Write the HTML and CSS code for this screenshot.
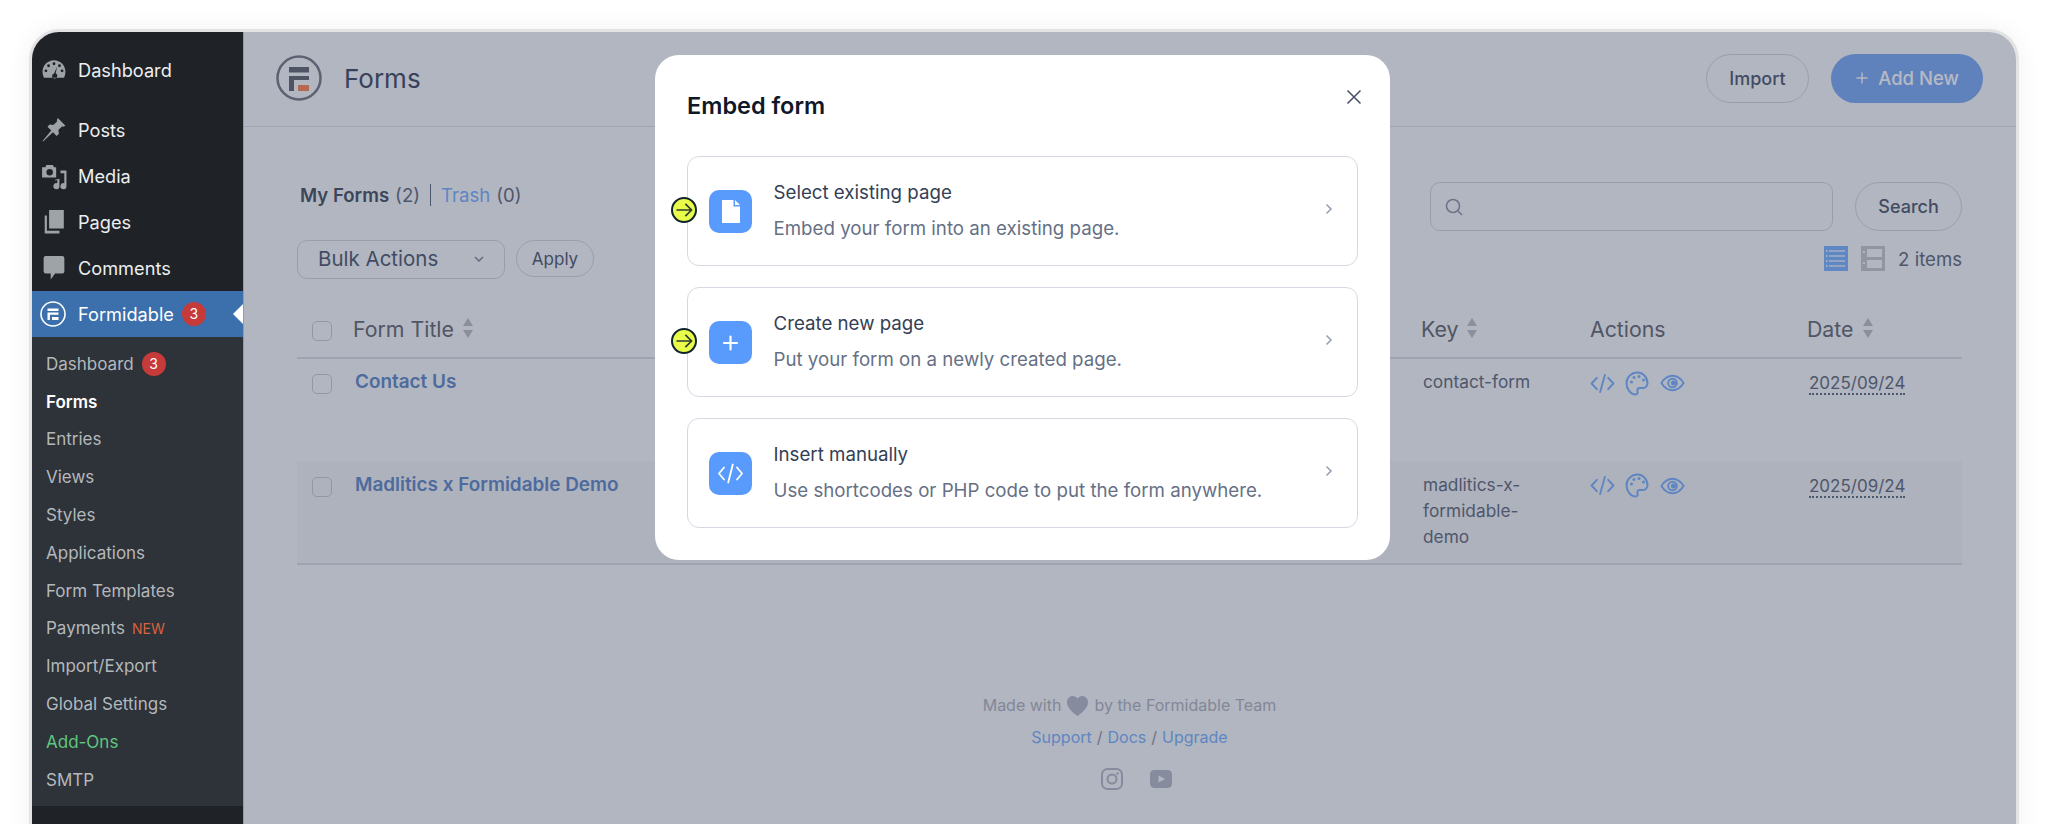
FILE: index.html
```html
<!DOCTYPE html>
<html lang="en">
<head>
    <meta charset="UTF-8" />
    <title>Forms - Formidable</title>
    <link rel="stylesheet" href="styles.css">
</head>
<body>
    <div class="window">
        <!-- Admin menu -->
        <nav class="sidebar">
            <ul class="menu">
                <li class="menu-item first">
                    <svg class="menu-icon" viewBox="0 0 22 22"><path fill-rule="evenodd" d="M11 2C5.200 2 .5 6.700 .5 12.500c0 2 .5 3.800 1.300 5.500h18.400c.8-1.700 1.300-3.500 1.300-5.500C21.500 6.700 16.800 2 11 2zM11 4a1.300 1.300 0 110 2.600A1.300 1.300 0 0111 4zM6 5.800a1.300 1.300 0 110 2.600 1.300 1.300 0 010-2.600zM16 5.800a1.300 1.300 0 110 2.600 1.300 1.300 0 010-2.600zM3.600 10.500a1.300 1.300 0 110 2.600 1.300 1.300 0 010-2.600zM18.400 10.500a1.300 1.300 0 110 2.600 1.300 1.300 0 010-2.600zM13.800 8l-1.300 6.200a2.300 2.300 0 11-3 1.300 2.300 2.300 0 011.600-1.300z"/></svg>
                    Dashboard
                </li>
                <li class="menu-item">
                    <svg class="menu-icon" viewBox="0 0 22 22"><path d="M14.500 0l7 7-2 1-1-.5-3.500 3.500.5 3.500-2 2-3.500-3.500L1 21.500l-.5-.5 8-9.500L5 8l2-2 3.500.5L14 3l-.5-1z"/></svg>
                    Posts
                </li>
                <li class="menu-item">
                    <svg class="menu-icon media" viewBox="0 0 24 24"><path fill-rule="evenodd" d="M1 3h3l1-2h6l1 2h2v9.500H1zM8 4.500a3 3 0 100 6 3 3 0 000-6z"/><path d="M18 6h5.500v14.500a2.800 2.800 0 11-2-2.700V8.500H18zM13 14.500l4-1v7a2.800 2.800 0 11-2-2.700v-3l-2 .5z"/></svg>
                    Media
                </li>
                <li class="menu-item">
                    <svg class="menu-icon" viewBox="0 0 22 22"><path d="M6.500 0H20v17H6.500zM2.500 5h2v14h11.500v2.500H2.500z"/></svg>
                    Pages
                </li>
                <li class="menu-item">
                    <svg class="menu-icon" viewBox="0 0 22 22"><path d="M3.500 0h15a2 2 0 012 2v12a2 2 0 01-2 2H12l-4 5.500V16H3.500a2 2 0 01-2-2V2a2 2 0 012-2z"/></svg>
                    Comments
                </li>
                <li class="menu-item active">
                    <svg class="menu-icon logo-white" viewBox="0 0 26 26"><circle cx="13" cy="13" r="12" fill="none" stroke="#fff" stroke-width="1.600"/><path fill="#fff" d="M7.500 7.500h11v2.400h-11zM7.500 11.500h11v2.300h-8.600v5.200H7.500zM12 16h6.500v3H12z"/></svg>
                    Formidable
                    <span class="count">3</span>
                    <span class="active-arrow"></span>
                </li>
            </ul>
            <ul class="submenu">
                <li>Dashboard <span class="count">3</span></li>
                <li class="current">Forms</li>
                <li>Entries</li>
                <li>Views</li>
                <li>Styles</li>
                <li>Applications</li>
                <li>Form Templates</li>
                <li>Payments <span class="new-tag">NEW</span></li>
                <li>Import/Export</li>
                <li>Global Settings</li>
                <li class="addons">Add-Ons</li>
                <li>SMTP</li>
            </ul>
        </nav>

        <main class="main">
            <header class="topbar">
                <svg class="brand" viewBox="0 0 46 46"><circle cx="23" cy="23" r="21.500" fill="none" stroke="#727780" stroke-width="2.500"/><path fill="#5e626c" d="M13 12h20v5.500H13zM13 21h20v4H18v11h-5z"/><path fill="#ff834b" d="M22 30h11v6H22z"/></svg>
                <h1>Forms</h1>
                <button class="btn btn-ghost import-btn">Import</button>
                <button class="btn btn-primary">
                    <svg class="plus" viewBox="0 0 14 14"><path d="M7 1.500v11M1.500 7h11"/></svg>
                    Add New
                </button>
            </header>

            <section class="content">
                <div class="toolbar">
                    <div class="toolbar-left">
                        <div class="views">
                            <strong>My Forms</strong> <span class="num">(2)</span>
                            <span class="sep"></span>
                            <a class="link">Trash</a> <span class="num">(0)</span>
                        </div>
                        <div class="bulk">
                            <div class="select">
                                Bulk Actions
                                <svg class="select-chev" viewBox="0 0 10 6"><path d="M1 1l4 4 4-4"/></svg>
                            </div>
                            <button class="btn btn-ghost apply-btn">Apply</button>
                        </div>
                    </div>
                    <div class="toolbar-right">
                        <div class="search">
                            <div class="search-input">
                                <svg viewBox="0 0 20 20"><circle cx="9" cy="9" r="6.500"/><path d="M14 14l4 4"/></svg>
                            </div>
                            <button class="btn btn-ghost search-btn">Search</button>
                        </div>
                        <div class="count-row">
                            <svg class="view-icon" viewBox="0 0 24 25"><path fill="#77b1ff" d="M0 0h24v25H0z"/><path stroke="#e4edf9" stroke-width="1.500" d="M5 5h16M5 10h16M5 15h16M5 20h16"/><path fill="#e4edf9" d="M2 4h1.500v2H2zM2 9h1.500v2H2zM2 14h1.500v2H2zM2 19h1.500v2H2z"/></svg>
                            <svg class="view-icon" viewBox="0 0 24 25"><path fill="#c7c6c6" d="M0 0h24v25H0z"/><path fill="#f9fafb" d="M6 3h15v8H6zM6 14h15v8H6z"/><path fill="#f9fafb" d="M2 5h2v2H2zM2 16h2v2H2z"/></svg>
                            <span>2 items</span>
                        </div>
                    </div>
                </div>

                <table class="forms-table">
                    <thead>
                        <tr>
                            <th class="col-check"><span class="check"></span></th>
                            <th class="col-title">Form Title <span class="sort"></span></th>
                            <th class="col-entries"></th>
                            <th class="col-key">Key <span class="sort"></span></th>
                            <th class="col-actions">Actions</th>
                            <th class="col-date">Date <span class="sort"></span></th>
                        </tr>
                    </thead>
                    <tbody>
                        <tr>
                            <td><span class="check"></span></td>
                            <td class="form-name">Contact Us</td>
                            <td></td>
                            <td class="form-key">contact-form</td>
                            <td>
                                <div class="actions">
                                    <svg class="act-code" viewBox="0 0 26 20"><path d="M7 4L1.500 10 7 16M19 4l5.500 6L19 16M15.500 1l-5 18"/></svg>
                                    <svg class="act-palette" viewBox="0 0 25 25"><path d="M12.500 1.500c-6.100 0-11 4.700-11 10.800 0 6 4.400 11.200 9 11.200 2 0 2.500-1.500 2-3-.7-2 .3-3.500 2.500-3.500h3c2.500 0 4.500-2 4.500-4.700 0-6-4.600-10.800-10-10.800z"/><circle class="dot" cx="6.500" cy="11" r="1.500"/><circle class="dot" cx="9" cy="6.500" r="1.500"/><circle class="dot" cx="14" cy="5.500" r="1.500"/><circle class="dot" cx="18.500" cy="9" r="1.500"/></svg>
                                    <svg class="act-eye" viewBox="0 0 26 18"><path d="M1.500 9C4.500 4 8.500 1.500 13 1.500S21.500 4 24.500 9c-3 5-7 7.500-11.500 7.500S4.500 14 1.500 9z"/><circle cx="13" cy="9" r="4.500"/><circle class="dot" cx="14" cy="9" r="2.600"/></svg>
                                </div>
                            </td>
                            <td><span class="date">2025/09/24</span></td>
                        </tr>
                        <tr class="alt">
                            <td><span class="check"></span></td>
                            <td class="form-name">Madlitics x Formidable Demo</td>
                            <td></td>
                            <td class="form-key">madlitics-x-<br>formidable-<br>demo</td>
                            <td>
                                <div class="actions">
                                    <svg class="act-code" viewBox="0 0 26 20"><path d="M7 4L1.500 10 7 16M19 4l5.500 6L19 16M15.500 1l-5 18"/></svg>
                                    <svg class="act-palette" viewBox="0 0 25 25"><path d="M12.500 1.500c-6.100 0-11 4.700-11 10.800 0 6 4.400 11.200 9 11.200 2 0 2.500-1.500 2-3-.7-2 .3-3.500 2.500-3.500h3c2.500 0 4.500-2 4.500-4.700 0-6-4.600-10.800-10-10.800z"/><circle class="dot" cx="6.500" cy="11" r="1.500"/><circle class="dot" cx="9" cy="6.500" r="1.500"/><circle class="dot" cx="14" cy="5.500" r="1.500"/><circle class="dot" cx="18.500" cy="9" r="1.500"/></svg>
                                    <svg class="act-eye" viewBox="0 0 26 18"><path d="M1.500 9C4.500 4 8.500 1.500 13 1.500S21.500 4 24.500 9c-3 5-7 7.500-11.500 7.500S4.500 14 1.500 9z"/><circle cx="13" cy="9" r="4.500"/><circle class="dot" cx="14" cy="9" r="2.600"/></svg>
                                </div>
                            </td>
                            <td><span class="date">2025/09/24</span></td>
                        </tr>
                    </tbody>
                </table>

                <footer class="credits">
                    <p class="made">Made with
                        <svg class="heart" viewBox="0 0 24 22"><path d="M12 22C5 16.500 1 12.500 1 7.500 1 3.500 4 1 7 1c2 0 3.800 1 5 3 1.200-2 3-3 5-3 3 0 6 2.500 6 6.500 0 5-4 9-11 14.500z"/></svg>
                        by the Formidable Team</p>
                    <p class="links"><a class="link">Support</a> / <a class="link">Docs</a> / <a class="link">Upgrade</a></p>
                    <div class="social">
                        <svg viewBox="0 0 22 22"><rect x="1" y="1" width="20" height="20" rx="5.500" fill="none" stroke="#b4b8c4" stroke-width="2"/><circle cx="11" cy="11" r="4.500" fill="none" stroke="#b4b8c4" stroke-width="2"/><circle cx="16.500" cy="5.500" r="1.200" fill="#b4b8c4"/></svg>
                        <svg viewBox="0 0 22 18"><rect x="0" y="0" width="22" height="18" rx="4.500" fill="#b4b8c4"/><path fill="#f9fafb" d="M8.500 5.500l6.500 3.500-6.500 3.500z"/></svg>
                    </div>
                </footer>
            </section>

            <div class="overlay"></div>

            <!-- Embed dialog -->
            <div class="modal">
                <h2 class="modal-title">Embed form</h2>
                <svg class="close-modal" viewBox="0 0 16 16"><path d="M1.500 1.500l13 13M14.500 1.500l-13 13"/></svg>

                <div class="option">
                    <span class="hint"><svg viewBox="0 0 16 16"><path d="M2.500 8h11M9 3.500L13.500 8 9 12.500"/></svg></span>
                    <span class="option-icon">
                        <svg viewBox="0 0 43 43"><path fill="#fff" d="M13 10h11.500v6.500H31V33H13zM26 10l5 5h-5z"/></svg>
                    </span>
                    <div class="option-text">
                        <div class="option-title">Select existing page</div>
                        <div class="option-desc">Embed your form into an existing page.</div>
                    </div>
                    <svg class="chevron" viewBox="0 0 8 12"><path d="M1.500 1.500L6 6l-4.500 4.500"/></svg>
                </div>

                <div class="option">
                    <span class="hint"><svg viewBox="0 0 16 16"><path d="M2.500 8h11M9 3.500L13.500 8 9 12.500"/></svg></span>
                    <span class="option-icon">
                        <svg viewBox="0 0 43 43"><path fill="none" stroke="#fff" stroke-width="2.200" stroke-linecap="round" d="M21.500 15.500v13M15 22h13"/></svg>
                    </span>
                    <div class="option-text">
                        <div class="option-title">Create new page</div>
                        <div class="option-desc">Put your form on a newly created page.</div>
                    </div>
                    <svg class="chevron" viewBox="0 0 8 12"><path d="M1.500 1.500L6 6l-4.500 4.500"/></svg>
                </div>

                <div class="option">
                    <span class="option-icon">
                        <svg viewBox="0 0 43 43"><path fill="none" stroke="#fff" stroke-width="1.800" stroke-linecap="round" stroke-linejoin="round" d="M15 15.500L10 21.500l5 6M28 15.500l5 6-5 6M23.800 12.500l-4.600 18"/></svg>
                    </span>
                    <div class="option-text">
                        <div class="option-title">Insert manually</div>
                        <div class="option-desc">Use shortcodes or PHP code to put the form anywhere.</div>
                    </div>
                    <svg class="chevron" viewBox="0 0 8 12"><path d="M1.500 1.500L6 6l-4.500 4.500"/></svg>
                </div>
            </div>
        </main>
    </div>
</body>
</html>
```

FILE: styles.css
```css
* {
    box-sizing: border-box;
}

html, body {
    height: 100%;
}

body {
    margin: 0;
    padding: 29px 29px 0 29px;
    background-color: #fff;
    font-family: Inter, "Liberation Sans", sans-serif;
    overflow: hidden;
}

ul {
    list-style: none;
    margin: 0;
    padding: 0;
}

/* Frame */
.window {
    display: flex;
    height: 824px;
    border: 3px solid #e3e3e3;
    border-bottom: none;
    border-radius: 30px 30px 0 0;
    overflow: hidden;
    box-shadow: 0 0 24px rgba(0, 0, 0, 0.06);
}

/* Admin menu */
.sidebar {
    flex: 0 0 211px;
    background-color: #1f2327;
    color: #f0f0f1;
}

.menu {
    padding-top: 15px;
}

.menu-item {
    position: relative;
    display: flex;
    align-items: center;
    height: 46px;
    padding-left: 46px;
    font-size: 18.2px;
    color: #eceef0;
}

.menu-item.first {
    margin-bottom: 14px;
}

.menu-icon {
    position: absolute;
    left: 10px;
    top: 11px;
    width: 24px;
    height: 24px;
    fill: #9ea3a8;
}

.menu-icon.media {
    left: 9px;
    width: 26px;
    height: 26px;
}

.menu-item.active {
    padding-bottom: 1px;
    background-color: #3b70ad;
    color: #fff;
}

.menu-icon.logo-white {
    left: 8px;
    top: 10px;
    width: 26px;
    height: 26px;
}

.count {
    display: inline-flex;
    align-items: center;
    justify-content: center;
    width: 24px;
    height: 24px;
    margin-left: 8px;
    border-radius: 50%;
    background-color: #c73a3a;
    color: #fff;
    font-size: 14px;
}

.active-arrow {
    position: absolute;
    right: 0;
    top: 13px;
    border-top: 10px solid transparent;
    border-bottom: 10px solid transparent;
    border-right: 10px solid #fff;
}

.submenu {
    height: 469px;
    padding-top: 8px;
    background-color: #2e3239;
}

.submenu li {
    display: flex;
    align-items: center;
    height: 37.8px;
    padding-left: 14px;
    font-size: 17px;
    color: #b4b8bc;
}

.submenu .current {
    color: #fff;
    font-weight: 600;
}

.submenu .addons {
    color: #5fc77f;
}

.new-tag {
    margin-left: 7px;
    font-size: 14px;
    color: #d8633f;
}

/* Main */
.main {
    position: relative;
    flex: 1;
    min-width: 0;
    background-color: #f9fafb;
    color: #424b59;
}

.overlay {
    position: absolute;
    top: 0;
    left: 0;
    right: 0;
    bottom: 0;
    border-left: 1px solid rgba(0, 0, 0, 0.15);
    background-color: rgba(52, 61, 90, 0.36);
}

.topbar {
    display: flex;
    align-items: center;
    height: 95px;
    padding: 0 33px 2px 33px;
    border-bottom: 1px solid #dde0e6;
}

.brand {
    width: 46px;
    height: 46px;
    margin-right: 22px;
}

h1 {
    flex: 1;
    margin: 0;
    font-size: 26px;
    font-weight: 400;
    color: #39445a;
}

.btn {
    display: inline-flex;
    align-items: center;
    justify-content: center;
    border: 1px solid #d0d5dd;
    border-radius: 25px;
    background: transparent;
    font-family: inherit;
    font-size: 18px;
    font-weight: 500;
    color: #4a5468;
}

.import-btn {
    width: 103px;
    height: 49px;
    margin-right: 22px;
}

.btn-primary {
    width: 152px;
    height: 49px;
    border: none;
    background-color: #77a9f5;
    font-size: 18.500px;
    color: #fff;
    gap: 9px;
}

.plus {
    width: 14px;
    height: 14px;
    fill: none;
    stroke: #fff;
    stroke-width: 1.400;
}

.content {
    padding: 0 54px 0 54px;
}

.toolbar {
    display: flex;
    justify-content: space-between;
}

.views {
    display: flex;
    align-items: center;
    height: 26px;
    margin: 55px 0 32px 3px;
    gap: 6px;
    font-size: 18.600px;
    color: #424b59;
}

.views strong {
    font-weight: 600;
}

.num {
    color: #5c6678;
}

.sep {
    width: 1px;
    height: 22px;
    margin: 0 4px;
    background-color: #5c6678;
}

.link {
    color: #77b0fd;
}

.bulk {
    display: flex;
    gap: 11px;
}

.select {
    position: relative;
    width: 208px;
    height: 39px;
    padding: 0 0 0 20px;
    border: 1px solid #d0d5dd;
    border-radius: 10px;
    font-size: 20.500px;
    line-height: 35px;
    color: #4a5468;
}

.select-chev {
    position: absolute;
    right: 20px;
    top: 15px;
    width: 10px;
    height: 6px;
    fill: none;
    stroke: #7c8699;
    stroke-width: 1.500;
}

.apply-btn {
    width: 78px;
    height: 37px;
    font-size: 17px;
    font-weight: 400;
}

.toolbar-right {
    padding-top: 55px;
    width: 532px;
}

.search {
    display: flex;
    gap: 22px;
}

.search-input {
    display: flex;
    align-items: center;
    flex: 1;
    height: 49px;
    padding-left: 13px;
    border: 1px solid #d0d5dd;
    border-radius: 10px;
}

.search-input svg {
    width: 20px;
    height: 20px;
    fill: none;
    stroke: #8a93a5;
    stroke-width: 1.600;
}

.search-btn {
    width: 107px;
    height: 49px;
}

.count-row {
    display: flex;
    align-items: center;
    justify-content: flex-end;
    gap: 13px;
    margin-top: 15px;
    font-size: 18.600px;
    color: #5c6678;
}

.view-icon {
    width: 24px;
    height: 25px;
}

/* Table */
.forms-table {
    width: 100%;
    margin-top: 22px;
    border-collapse: collapse;
    table-layout: fixed;
}

.forms-table th {
    height: 57px;
    padding: 0;
    border-bottom: 2px solid #dbdce1;
    font-size: 21.300px;
    font-weight: 400;
    text-align: left;
    color: #60646c;
}

.col-check {
    width: 56px;
}

.col-title {
    width: 439px;
}

.col-entries {
    width: 629px;
}

.col-key {
    width: 169px;
}

.col-actions {
    width: 217px;
}

.forms-table td {
    height: 103px;
    padding: 11px 0 0 0;
    vertical-align: top;
    font-size: 17.300px;
    line-height: 26px;
}

.forms-table td.form-name {
    padding: 10px 0 0 2px;
    font-size: 18.900px;
    font-weight: 600;
    color: #5b86c4;
}

.forms-table td.form-key {
    padding: 10px 0 0 2px;
    color: #5c6678;
}

.forms-table tbody tr {
    border-bottom: 1px solid transparent;
}

.forms-table .alt td {
    background-color: #f3f4f5;
}

.forms-table .alt {
    border-bottom: 2px solid #dbdce1;
}

.check {
    display: block;
    width: 20px;
    height: 20px;
    margin: 4px 0 0 15px;
    border: 1px solid #c4cad4;
    border-radius: 5px;
}

.sort {
    display: inline-block;
    position: relative;
    width: 11px;
    height: 20px;
    margin-left: 3px;
    vertical-align: -1px;
}

.sort::before,
.sort::after {
    content: "";
    position: absolute;
    left: 0;
    border-left: 5.500px solid transparent;
    border-right: 5.500px solid transparent;
}

.sort::before {
    top: 0;
    border-bottom: 8px solid #bcbdc3;
}

.sort::after {
    bottom: 0;
    border-top: 8px solid #bcbdc3;
}

.actions {
    display: flex;
    align-items: center;
    height: 26px;
    gap: 10px;
}

.actions svg {
    fill: none;
    stroke: #77b0fd;
    stroke-width: 2;
    stroke-linecap: round;
    stroke-linejoin: round;
}

.actions .dot {
    fill: #77b0fd;
    stroke: none;
}

.act-code {
    width: 25px;
    height: 19px;
}

.act-palette {
    width: 25px;
    height: 25px;
}

.act-eye {
    width: 25px;
    height: 18px;
}

.date {
    margin-left: 2px;
    font-size: 17px;
    color: #5c6678;
    border-bottom: 2px dotted #5c6678;
}

/* Footer credits */
.credits {
    margin-top: 127px;
    text-align: center;
    font-size: 16px;
    color: #aeb2bb;
}

.credits p {
    display: flex;
    align-items: center;
    justify-content: center;
    height: 26px;
    margin: 0;
    gap: 5px;
}

.heart {
    width: 23px;
    height: 21px;
    fill: #b4b8c4;
}

.credits .links {
    margin-top: 6px;
    color: #8d93a3;
}

.social {
    display: flex;
    align-items: center;
    justify-content: center;
    gap: 27px;
    margin-top: 18px;
    padding-left: 13px;
}

.social svg {
    width: 22px;
    height: 22px;
}

/* Modal */
.modal {
    position: absolute;
    left: 412px;
    top: 23px;
    width: 735px;
    height: 505px;
    padding: 0 32px;
    border-radius: 24px;
    background-color: #fff;
}

.modal-title {
    height: 101px;
    margin: 0;
    padding-top: 37px;
    font-size: 23.500px;
    font-weight: 600;
    line-height: 28px;
    color: #101828;
}

.close-modal {
    position: absolute;
    right: 28px;
    top: 34px;
    width: 16px;
    height: 16px;
    fill: none;
    stroke: #4a5468;
    stroke-width: 1.600;
}

.option {
    position: relative;
    display: flex;
    align-items: center;
    height: 110px;
    margin-bottom: 21px;
    padding: 0 24px 0 20.500px;
    border: 1.500px solid #d5d9e2;
    border-radius: 12px;
}

.hint {
    position: absolute;
    left: -17px;
    top: 40px;
    width: 26px;
    height: 26px;
    border: 2px solid #10242c;
    border-radius: 50%;
    background-color: #eafc4a;
}

.hint svg {
    display: block;
    width: 22px;
    height: 22px;
    fill: none;
    stroke: #2c3a30;
    stroke-width: 1.200;
}

.option-icon {
    flex: 0 0 43px;
    width: 43px;
    height: 43px;
    margin-right: 22px;
    border-radius: 10px;
    background-color: #589bfd;
}

.option-icon svg {
    display: block;
    width: 43px;
    height: 43px;
}

.option-text {
    flex: 1;
}

.option-title {
    margin-bottom: 14px;
    font-size: 18.700px;
    line-height: 22px;
    color: #344054;
}

.option-desc {
    font-size: 18.700px;
    line-height: 22px;
    color: #667085;
}

.chevron {
    width: 8px;
    height: 12px;
    margin-top: -4px;
    fill: none;
    stroke: #98a2b3;
    stroke-width: 1.600;
}
```
